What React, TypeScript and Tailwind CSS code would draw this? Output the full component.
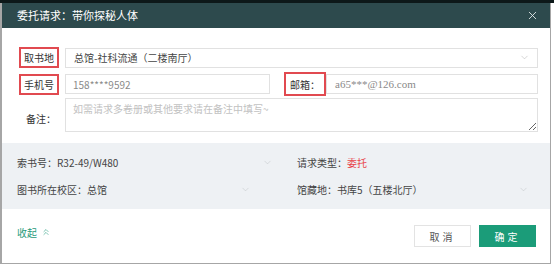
import { ChevronDown, ChevronsUp, X } from "lucide-react";

/* ================= SMALL PARTS ================= */

const MarkedLabel = ({ text }: { text: string }) => (
  <span className="inline-flex items-center h-[21px] px-[3px] border-2 border-[#e14a50] text-[#333]">
    {text}
  </span>
);

const InfoChevron = () => (
  <ChevronDown size={11} strokeWidth={1} className="text-[#b9bcc0]" />
);

/* ================= COMPONENT ================= */

const App = () => {
  return (
    <div className="w-[554px] h-[266px] bg-white text-[10px] font-['Noto_Sans_CJK_SC','Noto_Sans',sans-serif]">
      <div className="h-[3px] bg-[#0d1819]" />

      <div className="w-[551px] h-[261px] flex flex-col border-l-2 border-r border-b border-[#a6a6a6]">
        {/* ================= HEADER ================= */}

        <div className="h-[25px] shrink-0 flex items-center justify-between pl-[15px] pr-[11px] bg-[#2d4a4d] text-white text-[11px]">
          <span>委托请求：带你探秘人体</span>
          <X size={13} strokeWidth={1.6} className="text-[#e8eeee]" />
        </div>

        {/* ================= FORM ================= */}

        <div className="flex flex-col pt-[19px] pb-[11px] pr-[12px]">
          <div className="flex items-center h-[21px]">
            <div className="w-[63px] shrink-0 flex justify-end pr-[6px]">
              <MarkedLabel text="取书地" />
            </div>
            <div className="flex-1 h-[20px] flex items-center justify-between pl-[8px] pr-[7px] border border-[#e1e1e1] text-[#444]">
              <span>总馆-社科流通（二楼南厅）</span>
              <ChevronDown size={11} strokeWidth={1} className="text-[#a8a8a8]" />
            </div>
          </div>

          <div className="flex items-center h-[24px] mt-[4px]">
            <div className="w-[63px] shrink-0 flex justify-end pr-[6px]">
              <MarkedLabel text="手机号" />
            </div>
            <div className="w-[205px] h-[20px] flex items-center pl-[7px] border border-[#e1e1e1] text-[#8a8a8a]">
              158****9592
            </div>
            <div className="ml-[14px] h-[24px] flex items-center">
              <span className="inline-flex items-center h-[24px] px-[4px] border-2 border-[#e14a50] text-[#333]">
                邮箱：
              </span>
            </div>
            <div className="flex-1 h-[20px] flex items-center pl-[8px] border border-[#e1e1e1] text-[#8a8a8a] text-[11px] font-['Liberation_Serif',serif]">
              a65***@126.com
            </div>
          </div>

          <div className="flex mt-[2px]">
            <div className="w-[63px] shrink-0 flex justify-end pr-[9px] pt-[13px] text-[#333]">
              备注：
            </div>
            <textarea
              className="flex-1 h-[34px] px-[7px] py-[2px] border border-[#e1e1e1] text-[10px] leading-[16px] placeholder:text-[#c2c2c2] outline-none"
              placeholder="如需请求多卷册或其他要求请在备注中填写~"
            />
          </div>
        </div>

        {/* ================= BOOK INFO ================= */}

        <div className="h-[66px] shrink-0 bg-[#eef1f4] flex flex-col justify-center gap-[11px] pl-[15px] text-[#444]">
          <div className="flex items-center h-[16px]">
            <div className="w-[256px] flex items-center justify-between">
              <span>索书号：R32-49/W480</span>
              <InfoChevron />
            </div>
            <span className="ml-[24px]">
              请求类型：<span className="text-[#e8434a]">委托</span>
            </span>
          </div>

          <div className="flex items-center h-[16px]">
            <div className="w-[234px] flex items-center justify-between">
              <span>图书所在校区：总馆</span>
              <InfoChevron />
            </div>
            <div className="ml-[46px] w-[232px] flex items-center justify-between">
              <span>馆藏地：书库5（五楼北厅）</span>
              <InfoChevron />
            </div>
          </div>
        </div>

        {/* ================= FOOTER ================= */}

        <div className="flex-1 flex items-center justify-between pl-[15px] pr-[14px]">
          <div className="flex items-center gap-[4px] text-[#1f9a7a] -mt-[8px]">
            <span>收起</span>
            <ChevronsUp size={10} strokeWidth={1.4} />
          </div>

          <div className="flex items-center gap-[8px]">
            <button className="w-[57px] h-[22px] border border-[#e3e3e3] bg-white text-[#555] tracking-[3px]">
              取消
            </button>
            <button className="w-[57px] h-[22px] bg-[#1b9c79] text-white tracking-[3px]">
              确定
            </button>
          </div>
        </div>
      </div>
    </div>
  );
};

export default App;
